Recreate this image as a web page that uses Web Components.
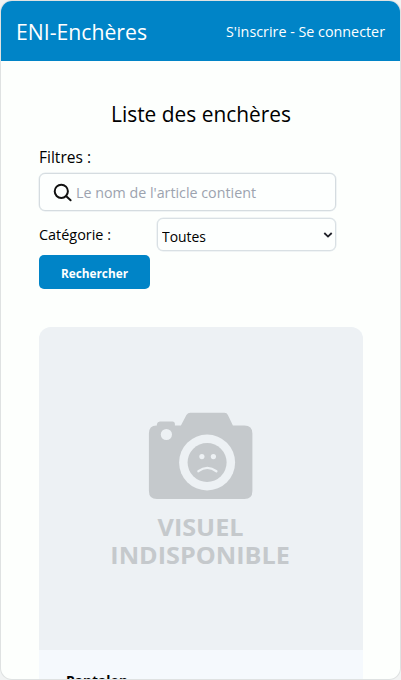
<!DOCTYPE html>
<html lang="fr">
<head>
<meta charset="utf-8">
<title>ENI-Enchères</title>
<style>
html,body{margin:0;height:100%;overflow:hidden}
body{background:#f1f3f3;font-family:"Open Sans","Noto Sans",sans-serif;color:#000}
</style>
</head>
<body>
<app-window>
  <site-header slot="header"></site-header>
  <page-title><fit-text width="180">Liste des enchères</fit-text></page-title>
  <filter-form></filter-form>
  <auction-card><fit-text width="62">Pantalon</fit-text></auction-card>
</app-window>
<script>
class Base extends HTMLElement {
  constructor() {
    super();
    this.attachShadow({ mode: 'open' }).innerHTML = this.constructor.html;
  }
}
const define = (name, html, extra) => {
  const C = extra || class extends Base {};
  C.html = html;
  customElements.define(name, C);
};

define('app-window', `<style>
:host{display:flex;flex-direction:column;box-sizing:border-box;width:401px;height:680px;padding:0 1px 1px 1px;background:#f1f3f3}
.frame{flex:1;min-height:0;display:flex;flex-direction:column;overflow:hidden;box-sizing:border-box;width:399px;margin-top:1px;border-radius:11px;background:#fdfffd;box-shadow:0 0 0 1px #dfe2e2}
main{display:flex;flex-direction:column;padding:0 37px}
</style><div class="frame"><slot name="header"></slot><main><slot></slot></main></div>`);

define('site-header', `<style>
:host{display:flex;flex:none;align-items:center;justify-content:space-between;box-sizing:border-box;height:60px;padding:0 15px 1px 15px;background:#0084c7;color:#fff}
h1{margin:0;font-size:22px;font-weight:400;line-height:30px}
nav{font-size:15px;line-height:22px}
</style><h1><fit-text width="131">ENI-Enchères</fit-text></h1><nav><fit-text width="159">S'inscrire - Se connecter</fit-text></nav>`);

define('page-title', `<style>
:host{display:flex;justify-content:center;font-size:22.5px;line-height:32px;margin-top:37px}
</style><slot></slot>`);

define('search-field', `<style>
:host{display:flex;align-items:center;box-sizing:border-box;width:297px;height:38px;padding-left:13px;border:1px solid #d5dce0;border-radius:6px;background:#fdfffe;color:#9ca3af;font-size:15px;box-shadow:0 0 0 .5px #e4eaed}
svg{width:20px;height:20px;margin:1px 3px 0 0}
</style><svg viewBox="0 0 20 20" fill="none" stroke="#111" stroke-width="2" stroke-linecap="round"><circle cx="8.300" cy="8.300" r="6.600"/><path d="M13.300 13.300 17.600 17.300"/></svg><fit-text width="180">Le nom de l'article contient</fit-text>`);

define('category-select', `<style>
:host{display:flex;align-items:center;justify-content:space-between;box-sizing:border-box;width:179px;height:33px;padding:2px 1px 0 3.500px;border:1px solid #d9e0e4;border-radius:6px;background:#fdfffe;font-size:15px;box-shadow:0 0 0 .5px #e4eaed}
svg{width:12px;height:12px;margin-bottom:2px}
</style><fit-text width="44">Toutes</fit-text><svg viewBox="0 0 12 12" fill="none" stroke="#1f2028" stroke-width="1.800"><path d="M2.300 4 6 7.600 9.700 4"/></svg>`);

define('filter-form', `<style>
:host{display:flex;flex-direction:column;align-items:flex-start;padding-left:1px}
.label{font-size:15.5px;line-height:24px;margin-top:15px;height:28px}
.row{display:flex;align-items:center;width:297px;justify-content:space-between;margin-top:7px;font-size:14.5px}
button{display:flex;align-items:center;justify-content:center;width:111px;height:34px;margin:4px 0 0;padding:0;border:0;border-radius:5px;background:#0084c7;color:#fff;font:700 12.5px "Open Sans","Noto Sans",sans-serif}
button fit-text{margin-top:2px}
</style><div class="label"><fit-text width="52">Filtres :</fit-text></div>
<search-field></search-field>
<div class="row"><fit-text width="72">Catégorie :</fit-text><category-select></category-select></div>
<button type="button"><fit-text width="67">Rechercher</fit-text></button>`);

define('missing-picture', `<style>
:host{display:block;height:323px;background:#edf1f4}
svg{display:block;width:324px;height:323px}
text{font:700 24px "Open Sans","Noto Sans",sans-serif}
</style><svg viewBox="0 0 324 323" fill="#c5c9cc">
<g transform="translate(-.6 0)">
<path d="M118 98.500H118.500V97Q119 94.500 121.500 94.500H134Q136.500 94.500 136.500 97V98.500H142.500L148 88Q149.500 85.700 152 85.700H186Q188.500 85.700 189.500 88L194.500 98.500H206Q214 98.500 214 106.500V164Q214 172 206 172H118.500Q110.500 172 110.500 164V106.500Q110.500 98.500 118 98.500Z"/>
<g fill="#edf1f4"><circle cx="128" cy="107.500" r="5.600"/><circle cx="168.700" cy="135.500" r="28"/></g>
<circle cx="168.700" cy="135.500" r="19.500"/>
<g fill="#edf1f4"><circle cx="163.500" cy="129.600" r="2.600"/><circle cx="175" cy="129.600" r="2.600"/></g>
<path d="M160 144.200Q168.800 137.500 178 144.200" fill="none" stroke="#edf1f4" stroke-width="2.300" stroke-linecap="round"/>
</g>
<text x="118.500" y="209.200" textLength="86" lengthAdjust="spacingAndGlyphs">VISUEL</text>
<text x="71.300" y="237" textLength="179.500" lengthAdjust="spacingAndGlyphs">INDISPONIBLE</text>
</svg>`);

define('auction-card', `<style>
:host{display:block;width:324px;height:420px;margin:38px 0 0 .5px;border-radius:12px;overflow:hidden;background:#f5f9fd}
.name{padding:19px 27px;font-size:15px;font-weight:700;line-height:22px}
</style><missing-picture></missing-picture><div class="name"><slot></slot></div>`);

/* Text run condensed horizontally to an exact advance width.
   Registered last, so that every parent's styles apply when it measures. */
define('fit-text', `<style>
:host{display:inline-block;white-space:nowrap}
span{display:inline-block;transform-origin:0 50%}
</style><span><slot></slot></span>`, class extends Base {
  connectedCallback() {
    const w = +this.getAttribute('width');
    const s = this.shadowRoot.querySelector('span');
    const natural = s.getBoundingClientRect().width;
    this.style.width = w + 'px';
    s.style.transform = 'scaleX(' + w / natural + ')';
  }
});
</script>
</body>
</html>
